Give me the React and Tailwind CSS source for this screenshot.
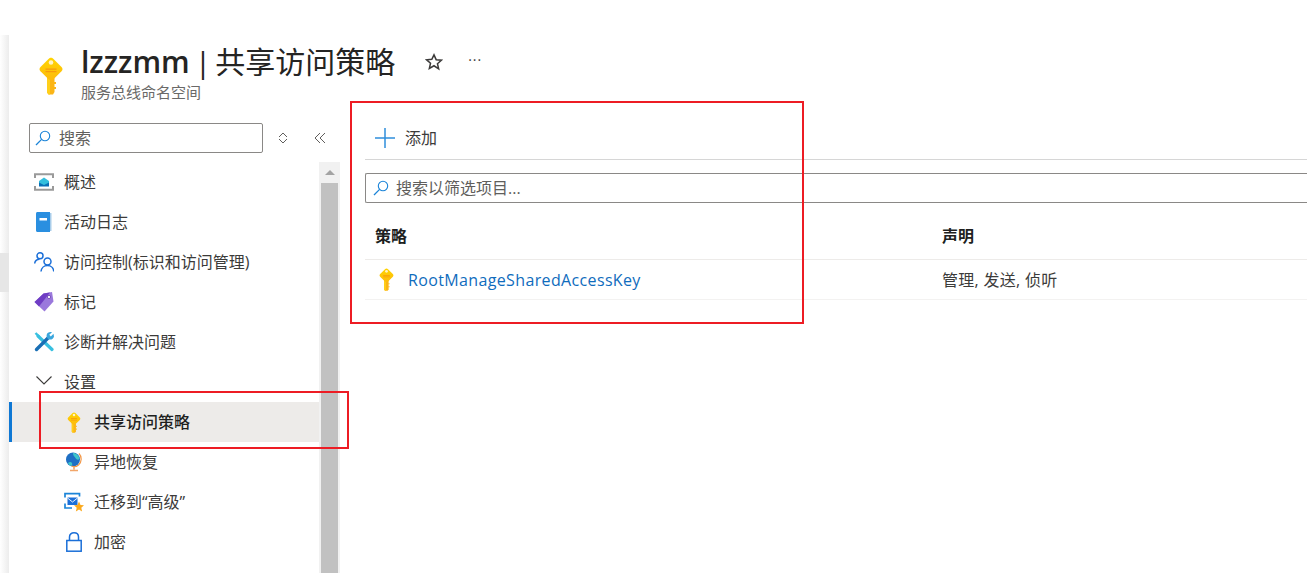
const FONT = "font-['Open_Sans','Noto_Sans_CJK_SC',sans-serif]"

function KeyIcon({ className }) {
  return (
    <svg viewBox="0 0 24 38" className={className}>
      <defs>
        <linearGradient id="keyGold" x1="0" y1="0" x2="0" y2="1">
          <stop offset="0" stopColor="#ffd400" />
          <stop offset="1" stopColor="#fdbb0d" />
        </linearGradient>
      </defs>
      <path d="M8 18h7.500v17l-1.500 2.500H9.500L8 35.500z" fill="#fbb516" />
      <path d="M8 18h3v19.500H9.500L8 35.500z" fill="#ffcf1a" />
      <path d="M15 25h2v2h-2zM15 30h2v2h-2z" fill="#fbb516" />
      <path d="M12 .8c1 0 1.700.5 2.500 1.200l8 8c1.300 1.300 1.300 3 0 4.300l-7.500 7.500c-1.700 1.600-4.300 1.600-6 0L1.500 14.300c-1.300-1.300-1.300-3 0-4.300l8-8C10.300 1.300 11 .8 12 .8z" fill="url(#keyGold)" />
      <circle cx="12" cy="5.500" r="2.300" fill="#fff3c4" />
      <path d="M6.500 11.500h11v1.200h-11zM6.500 14h11v1.200h-11z" fill="#f79a0e" />
    </svg>
  )
}

function SearchIcon() {
  return (
    <svg viewBox="0 0 16 16" className="w-4 h-4 shrink-0" fill="none" stroke="#1b84d8" strokeWidth="1.100">
      <circle cx="10" cy="6" r="4.700" />
      <path d="M6.600 9.400 1 15" strokeWidth="1.300" />
    </svg>
  )
}

function OverviewIcon() {
  return (
    <svg viewBox="0 0 20 18" className="w-5 h-[18px]">
      <path d="M1 5V1.200h18V5M1 13v3.800h18V13" fill="none" stroke="#9a9a9a" strokeWidth="2" />
      <path d="M5 8 10 4.500 15 8v5H5z" fill="#32bedd" />
      <path d="M5 13.500V9.500l5 2.500 5-2.500v4z" fill="#0a6fb5" />
    </svg>
  )
}

function BookIcon() {
  return (
    <svg viewBox="0 0 16 20" className="w-4 h-5">
      <path d="M0 1.500C0 .6.600 0 1.500 0H14v20H1.500C.6 20 0 19.400 0 18.500z" fill="#2a8fe0" />
      <path d="M14 1h1.500v18H14z" fill="#a9cdea" />
      <rect x="3.500" y="6" width="7.500" height="2.500" fill="#fff" />
    </svg>
  )
}

function PeopleIcon() {
  return (
    <svg viewBox="0 0 20 20" className="w-5 h-5" fill="none" stroke="#1b6fd8" strokeWidth="1.500">
      <circle cx="6" cy="3.800" r="3" />
      <path d="M.7 11.500C1 9 3 7.300 5.500 7.300" />
      <circle cx="13.500" cy="9.500" r="3.500" />
      <path d="M7 19.500c.3-3.500 3-6 6.500-6s6 2.500 6.300 6" />
    </svg>
  )
}

function TagIcon() {
  return (
    <svg viewBox="0 0 20 20" className="w-5 h-5">
      <path d="M.5 10 9.500 1.500 18 0l1.500 9.500-9 10z" fill="#9a78dc" />
      <path d="M.5 10 9.500 1.500 16 .5 5 14.500z" fill="#6f3dc4" />
      <circle cx="15" cy="5" r="1.600" fill="#fff" stroke="#5c2fa8" strokeWidth=".7" />
    </svg>
  )
}

function ToolsIcon() {
  return (
    <svg viewBox="0 0 20 20" className="w-5 h-5" fill="none">
      <path d="M4 4 18 17.500" stroke="#38c0e0" strokeWidth="3.200" strokeLinecap="round" />
      <path d="M1.500 1 5.500 5" stroke="#38c0e0" strokeWidth="2.400" />
      <path d="M14 6 2.500 17.500" stroke="#1a6fb5" strokeWidth="3.400" strokeLinecap="round" />
      <path d="M19.500 1.800 16.800 4.400l-1.500-1.600L18 .3c-2.300-.8-4.800.2-5.300 2.500-.4 2 .6 3.800 2.300 4.600 2.300.7 4.500-.6 5-3z" fill="#3aa6dd" />
    </svg>
  )
}

function ChevronIcon() {
  return (
    <svg viewBox="0 0 16 9" className="w-4 h-[9px] mb-1" fill="none" stroke="#3c3b3a" strokeWidth="1.100">
      <path d="M.5.5 8 8 15.500.5" />
    </svg>
  )
}

function GlobeIcon() {
  return (
    <svg viewBox="0 0 18 20" className="w-[18px] h-5">
      <circle cx="8" cy="7.500" r="7" fill="#1f6fc4" />
      <path d="M8 1c3 0 6 2.500 6.500 6-1.500 1.500-3 .5-4-1-.8-1.500-2.500-2-2.500-5z" fill="#3ec6c9" />
      <path d="M3 11c1-1 3-1.500 4 0 .5 1.500 0 2.500-1 3-1.500-.5-2.500-1.500-3-3z" fill="#3ec6c9" />
      <path d="M14 1.500c3 3 3 8.500-.5 11.500-2 1.700-5 2-7 1" fill="none" stroke="#f2994a" strokeWidth="1.200" />
      <path d="M9 15v2.500M5 18.500h8" stroke="#f2a66a" strokeWidth="1.600" />
    </svg>
  )
}

function MigrateIcon() {
  return (
    <svg viewBox="0 0 20 20" className="w-[21px] h-[21px]">
      <path d="M1 5V1.200h14.500V4M1 11v4.500h7" fill="none" stroke="#1b84d8" strokeWidth="1.700" />
      <rect x="3.500" y="5" width="10" height="7.500" fill="#1b6fd8" />
      <path d="M3.500 5.500 8.500 9.500l5-4" fill="none" stroke="#fff" strokeWidth=".9" />
      <path d="m15 9 1.500 3.500 3.500.3-2.700 2.400.8 3.800-3.100-2-3.100 2 .8-3.800L10 12.800l3.500-.3z" fill="#fba91c" />
    </svg>
  )
}

function LockIcon() {
  return (
    <svg viewBox="0 0 16 20" className="w-4 h-5" fill="none" stroke="#1b6fd8" strokeWidth="1.500">
      <rect x=".8" y="8.500" width="14.400" height="10.700" />
      <path d="M3.500 8.500V5C3.500 2.300 5.500.8 8 .8s4.500 1.500 4.500 4.200v3.500" />
    </svg>
  )
}

function NavRow({ icon, label, indent, active }) {
  return (
    <div
      className={`h-10 flex items-center shrink-0 ${indent ? 'pl-[55px]' : 'pl-[25px]'} ${
        active ? 'bg-[#edebe9] border-l-[3px] border-[#0f78d4] !pl-[52px]' : ''
      }`}
    >
      <div className="w-[20px] h-5 flex items-center justify-center shrink-0">{icon}</div>
      <span className={`ml-[10px] text-base whitespace-nowrap ${active ? 'font-medium text-[#201f1e]' : 'text-[#3c3b3a]'}`}>
        {label}
      </span>
    </div>
  )
}

const NAV_ITEMS = [
  { label: '概述', icon: <OverviewIcon /> },
  { label: '活动日志', icon: <BookIcon /> },
  { label: '访问控制(标识和访问管理)', icon: <PeopleIcon /> },
  { label: '标记', icon: <TagIcon /> },
  { label: '诊断并解决问题', icon: <ToolsIcon /> },
  { label: '设置', icon: <ChevronIcon /> },
  { label: '共享访问策略', icon: <KeyIcon className="w-[14px] h-[21px]" />, indent: true, active: true },
  { label: '异地恢复', icon: <GlobeIcon />, indent: true },
  { label: '迁移到“高级”', icon: <MigrateIcon />, indent: true },
  { label: '加密', icon: <LockIcon />, indent: true },
]

function Sidebar() {
  return (
    <aside className="w-[331px] shrink-0 flex flex-col">
      <div className="h-[44px] flex items-center pl-[20px]">
        <div className="w-[234px] h-[30px] border border-[#8a8886] rounded-[2px] flex items-center pl-[5px] gap-[8px]">
          <SearchIcon />
          <span className="text-base text-[#605e5c]">搜索</span>
        </div>
        <svg viewBox="0 0 10 12" className="w-[10px] h-3 ml-[15px]" fill="none" stroke="#605e5c">
          <path d="M1 5 5 1l4 4M1 7l4 4 4-4" />
        </svg>
        <svg viewBox="0 0 12 12" className="w-3 h-3 ml-[26px]" fill="none" stroke="#605e5c">
          <path d="M6 1 1 6l5 5M11 1 6 6l5 5" />
        </svg>
      </div>
      <div className="flex flex-1 min-h-0 mt-[2px]">
        <nav className="w-[310px] shrink-0 flex flex-col overflow-hidden">
          {NAV_ITEMS.map((item) => (
            <NavRow key={item.label} {...item} />
          ))}
        </nav>
        <div className="w-[21px] bg-[#f1f1f1] flex flex-col pl-[2px]">
          <div className="w-[17px] h-[21px] flex items-center justify-center">
            <div className="w-0 h-0 border-x-[5px] border-x-transparent border-b-[5px] border-b-[#a3a3a3]" />
          </div>
          <div className="w-[17px] flex-1 bg-[#c1c1c1]" />
        </div>
      </div>
    </aside>
  )
}

function PoliciesPane() {
  return (
    <main className="flex-1 min-w-0 pl-[25px]">
      <div className="h-[44px] border-b border-[#d6d6d6] flex items-center pl-[10px]">
        <svg viewBox="0 0 20 20" className="w-5 h-5" fill="none" stroke="#2f8fdc" strokeWidth="1.500">
          <path d="M10 0v20M0 10h20" />
        </svg>
        <span className="ml-[10px] text-base text-[#3c3b3a]">添加</span>
      </div>
      <div className="mt-[13px] h-[30px] border border-r-0 border-[#8a8886] rounded-l-[2px] flex items-center pl-[7px] gap-[7px]">
        <SearchIcon />
        <span className="text-base text-[#605e5c]">搜索以筛选项目...</span>
      </div>
      <div className="mt-[10px] h-[47px] border-b border-[#edebe9] flex items-center pl-[10px]">
        <span className="w-[567px] text-base font-semibold text-[#201f1e]">策略</span>
        <span className="text-base font-semibold text-[#201f1e]">声明</span>
      </div>
      <div className="h-10 border-b border-[#f3f2f1] flex items-center pl-[10px]">
        <div className="w-[567px] flex items-center">
          <KeyIcon className="w-[15px] h-[23px] ml-[4px]" />
          <span className="ml-[14px] text-base tracking-[0.36px] text-[#0f6cbd]">RootManageSharedAccessKey</span>
        </div>
        <span className="text-base tracking-[0.3px] text-[#3c3b3a]">管理, 发送, 侦听</span>
      </div>
    </main>
  )
}

export default function App() {
  return (
    <div className={`${FONT} relative w-[1307px] h-[573px] overflow-hidden bg-white flex`}>
      <div className="w-[9px] shrink-0 mt-[35px] bg-gradient-to-r from-white to-[#ececec] flex flex-col">
        <div className="mt-[218px] h-[39px] bg-[#e6e6e6]" />
      </div>
      <div className="flex-1 min-w-0 flex flex-col">
        <header className="h-[116px] shrink-0 flex items-start pt-[42px] pl-[30px]">
          <KeyIcon className="w-[24px] h-[38px] mt-[15px] shrink-0" />
          <div className="ml-[18px]">
            <div className="flex items-center h-[40px]">
              <span className="text-[30px] leading-10 text-[#252423] whitespace-nowrap">
                <span className="font-semibold">lzzzmm</span>
                <span className="ml-[5px] mr-[4px]">|</span>共享访问策略
              </span>
              <svg viewBox="0 0 24 24" className="w-[18px] h-[18px] ml-[30px]" fill="none" stroke="#3c3b3a" strokeWidth="2">
                <path d="m12 2.500 2.900 6.400 7 .7-5.300 4.600 1.600 6.900L12 17l-6.200 3.600 1.600-6.900-5.300-4.600 7-.7z" />
              </svg>
              <span className="ml-[25px] text-sm text-[#3c3b3a] tracking-[1px] -mt-1">···</span>
            </div>
            <div className="text-[15px] leading-5 text-[#6a6968] whitespace-nowrap">服务总线命名空间</div>
          </div>
        </header>
        <div className="flex flex-1 min-h-0">
          <Sidebar />
          <PoliciesPane />
        </div>
      </div>
      {/* red annotation boxes */}
      <div className="absolute left-[350px] top-[101px] w-[454px] h-[223px] border-2 border-[#ed1c24]" />
      <div className="absolute left-[39px] top-[391px] w-[310px] h-[58px] border-2 border-[#ed1c24]" />
    </div>
  )
}
